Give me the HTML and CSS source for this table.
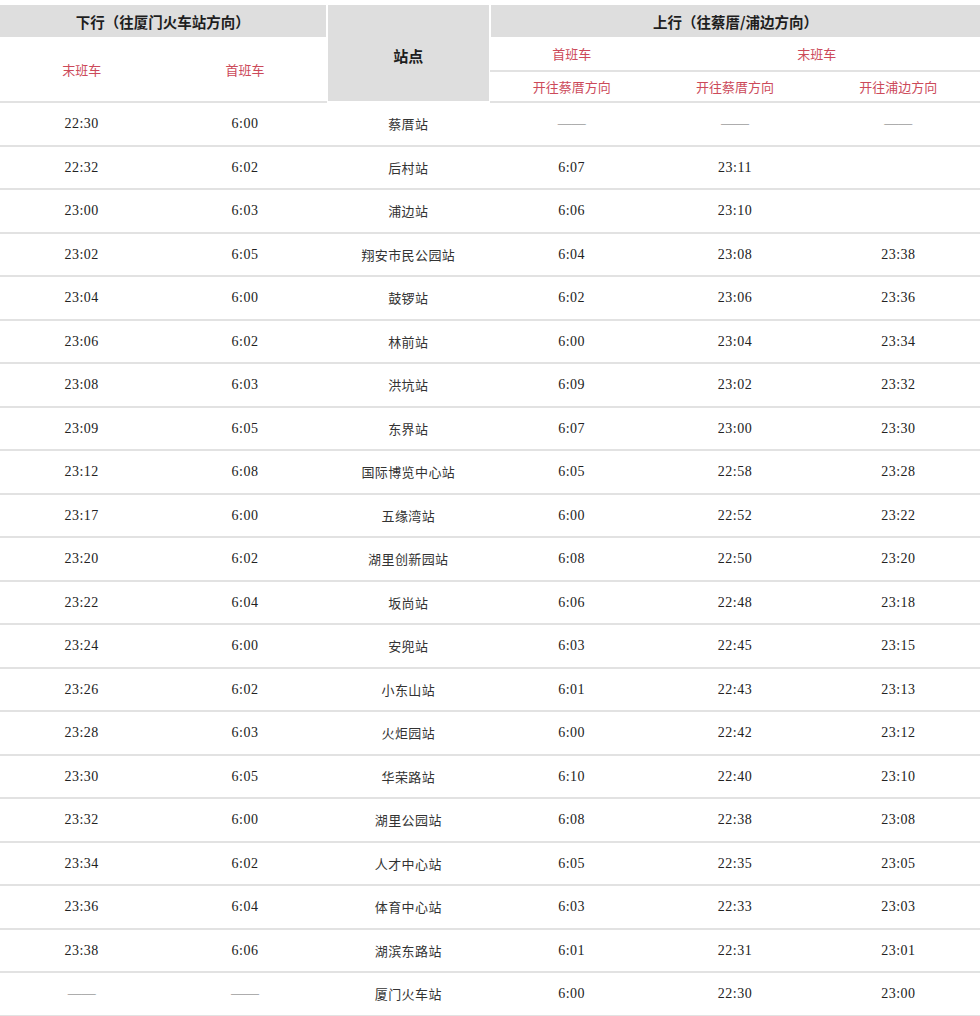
FILE: index.html
```html
<!DOCTYPE html>
<html lang="zh-CN">
<head>
<meta charset="utf-8">
<title>时刻表</title>
<link rel="stylesheet" href="styles.css">
</head>
<body>
<div class="sheet">
  <div class="h grp g-left">下行（往厦门火车站方向）</div>
  <div class="h station-h">站点</div>
  <div class="h grp g-right">上行（往蔡厝/浦边方向）</div>

  <div class="h red sub l1">末班车</div>
  <div class="h red sub l2">首班车</div>
  <div class="h red line r1">首班车</div>
  <div class="h red line r2">末班车</div>
  <div class="h red line c4">开往蔡厝方向</div>
  <div class="h red line c5">开往蔡厝方向</div>
  <div class="h red line c6">开往浦边方向</div>

  <div class="d t">22:30</div><div class="d t">6:00</div><div class="d">蔡厝站</div><div class="d dash">——</div><div class="d dash">——</div><div class="d dash">——</div>
  <div class="d t">22:32</div><div class="d t">6:02</div><div class="d">后村站</div><div class="d t">6:07</div><div class="d t">23:11</div><div class="d t"></div>
  <div class="d t">23:00</div><div class="d t">6:03</div><div class="d">浦边站</div><div class="d t">6:06</div><div class="d t">23:10</div><div class="d t"></div>
  <div class="d t">23:02</div><div class="d t">6:05</div><div class="d">翔安市民公园站</div><div class="d t">6:04</div><div class="d t">23:08</div><div class="d t">23:38</div>
  <div class="d t">23:04</div><div class="d t">6:00</div><div class="d">鼓锣站</div><div class="d t">6:02</div><div class="d t">23:06</div><div class="d t">23:36</div>
  <div class="d t">23:06</div><div class="d t">6:02</div><div class="d">林前站</div><div class="d t">6:00</div><div class="d t">23:04</div><div class="d t">23:34</div>
  <div class="d t">23:08</div><div class="d t">6:03</div><div class="d">洪坑站</div><div class="d t">6:09</div><div class="d t">23:02</div><div class="d t">23:32</div>
  <div class="d t">23:09</div><div class="d t">6:05</div><div class="d">东界站</div><div class="d t">6:07</div><div class="d t">23:00</div><div class="d t">23:30</div>
  <div class="d t">23:12</div><div class="d t">6:08</div><div class="d">国际博览中心站</div><div class="d t">6:05</div><div class="d t">22:58</div><div class="d t">23:28</div>
  <div class="d t">23:17</div><div class="d t">6:00</div><div class="d">五缘湾站</div><div class="d t">6:00</div><div class="d t">22:52</div><div class="d t">23:22</div>
  <div class="d t">23:20</div><div class="d t">6:02</div><div class="d">湖里创新园站</div><div class="d t">6:08</div><div class="d t">22:50</div><div class="d t">23:20</div>
  <div class="d t">23:22</div><div class="d t">6:04</div><div class="d">坂尚站</div><div class="d t">6:06</div><div class="d t">22:48</div><div class="d t">23:18</div>
  <div class="d t">23:24</div><div class="d t">6:00</div><div class="d">安兜站</div><div class="d t">6:03</div><div class="d t">22:45</div><div class="d t">23:15</div>
  <div class="d t">23:26</div><div class="d t">6:02</div><div class="d">小东山站</div><div class="d t">6:01</div><div class="d t">22:43</div><div class="d t">23:13</div>
  <div class="d t">23:28</div><div class="d t">6:03</div><div class="d">火炬园站</div><div class="d t">6:00</div><div class="d t">22:42</div><div class="d t">23:12</div>
  <div class="d t">23:30</div><div class="d t">6:05</div><div class="d">华荣路站</div><div class="d t">6:10</div><div class="d t">22:40</div><div class="d t">23:10</div>
  <div class="d t">23:32</div><div class="d t">6:00</div><div class="d">湖里公园站</div><div class="d t">6:08</div><div class="d t">22:38</div><div class="d t">23:08</div>
  <div class="d t">23:34</div><div class="d t">6:02</div><div class="d">人才中心站</div><div class="d t">6:05</div><div class="d t">22:35</div><div class="d t">23:05</div>
  <div class="d t">23:36</div><div class="d t">6:04</div><div class="d">体育中心站</div><div class="d t">6:03</div><div class="d t">22:33</div><div class="d t">23:03</div>
  <div class="d t">23:38</div><div class="d t">6:06</div><div class="d">湖滨东路站</div><div class="d t">6:01</div><div class="d t">22:31</div><div class="d t">23:01</div>
  <div class="d dash">——</div><div class="d dash">——</div><div class="d">厦门火车站</div><div class="d t">6:00</div><div class="d t">22:30</div><div class="d t">23:00</div>
</div>
</body>
</html>
```

FILE: styles.css
```css
html, body {
  margin: 0;
  padding: 0;
  background: #ffffff;
}

body {
  padding-top: 5px;
  font-family: "Liberation Serif", "Noto Sans CJK SC", serif;
  color: #333333;
}

.sheet {
  width: 980px;
  display: grid;
  grid-template-columns: repeat(6, 1fr);
  grid-template-rows: 32px 35px 31px;
  grid-auto-rows: 43.5px;
}

.sheet > div {
  display: flex;
  align-items: center;
  justify-content: center;
  box-sizing: border-box;
  white-space: nowrap;
}

.grp,
.station-h {
  background: #dedede;
  background-clip: padding-box;
  font-family: "Noto Sans CJK SC", sans-serif;
  font-weight: 700;
  color: #1e1e1e;
}

.grp {
  font-size: 14.5px;
  border-right: 1px solid #ffffff;
  border-left: 1px solid #ffffff;
}

.g-left {
  grid-column: 1 / 3;
  grid-row: 1;
  border-left: 0;
}

.g-right {
  grid-column: 4 / 7;
  grid-row: 1;
  border-right: 0;
}

.station-h {
  grid-column: 3;
  grid-row: 1 / 4;
  font-size: 15px;
  border-left: 1px solid #ffffff;
  border-right: 1px solid #ffffff;
  border-bottom: 2px solid #ffffff;
  padding-top: 4px;
}

.red {
  font-family: "Noto Sans CJK SC", sans-serif;
  font-size: 13px;
  color: #cc4a5a;
  border-bottom: 2px solid #e2e2e2;
}

.sub {
  grid-row: 2 / 4;
}

.l1 { grid-column: 1; }
.l2 { grid-column: 2; }

.r1 { grid-column: 4; grid-row: 2; }
.r2 { grid-column: 5 / 7; grid-row: 2; }
.c4 { grid-column: 4; grid-row: 3; }
.c5 { grid-column: 5; grid-row: 3; }
.c6 { grid-column: 6; grid-row: 3; }

.d {
  font-size: 13px;
  border-bottom: 2px solid #e2e2e2;
  letter-spacing: 0.4px;
  color: #333333;
}

.t {
  font-size: 14px;
  letter-spacing: 0.5px;
  color: #222222;
  padding-top: 1px;
}

.dash {
  color: #6e6e6e;
  font-size: 14px;
  letter-spacing: 0;
}
```
